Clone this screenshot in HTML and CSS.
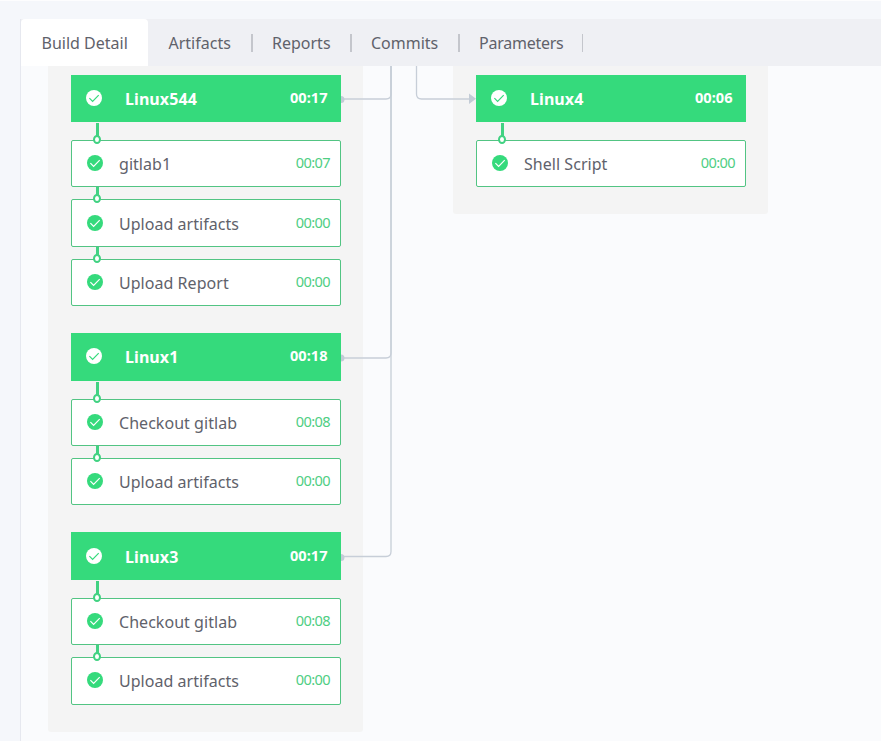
FILE: index.html
```
<!DOCTYPE html>
<html lang="en">
<head>
<meta charset="utf-8">
<title>Build Detail</title>
<link rel="stylesheet" href="styles.css">
</head>
<body>
<svg width="0" height="0" class="defs">
  <symbol id="check" viewBox="0 0 16 16"><circle cx="8" cy="8" r="8" fill="currentColor"/><path d="M3.4 8.2 6.6 11.4 12.7 5.2" fill="none" stroke="var(--tick)" stroke-width="1.2"/></symbol>
</svg>
<main class="page">
  <nav class="tabs">
    <a class="tab active"><span>Build Detail</span></a>
    <a class="tab sep"><span>Artifacts</span></a>
    <a class="tab sep"><span>Reports</span></a>
    <a class="tab sep"><span>Commits</span></a>
    <a class="tab sep last"><span>Parameters</span></a>
  </nav>
  <section class="canvas">
    <div class="stage">
      <div class="job">
        <header class="head"><svg class="icon"><use href="#check"/></svg><h2>Linux544</h2><time>00:17</time></header>
        <div class="step"><svg class="icon"><use href="#check"/></svg><span>gitlab1</span><time>00:07</time></div>
        <div class="step"><svg class="icon"><use href="#check"/></svg><span>Upload artifacts</span><time>00:00</time></div>
        <div class="step"><svg class="icon"><use href="#check"/></svg><span>Upload Report</span><time>00:00</time></div>
      </div>
      <div class="job">
        <header class="head"><svg class="icon"><use href="#check"/></svg><h2>Linux1</h2><time>00:18</time></header>
        <div class="step"><svg class="icon"><use href="#check"/></svg><span>Checkout gitlab</span><time>00:08</time></div>
        <div class="step"><svg class="icon"><use href="#check"/></svg><span>Upload artifacts</span><time>00:00</time></div>
      </div>
      <div class="job">
        <header class="head"><svg class="icon"><use href="#check"/></svg><h2>Linux3</h2><time>00:17</time></header>
        <div class="step"><svg class="icon"><use href="#check"/></svg><span>Checkout gitlab</span><time>00:08</time></div>
        <div class="step"><svg class="icon"><use href="#check"/></svg><span>Upload artifacts</span><time>00:00</time></div>
      </div>
    </div>
    <div class="stage short">
      <div class="job">
        <header class="head"><svg class="icon"><use href="#check"/></svg><h2>Linux4</h2><time>00:06</time></header>
        <div class="step"><svg class="icon"><use href="#check"/></svg><span>Shell Script</span><time>00:00</time></div>
      </div>
    </div>
    <svg class="links" width="140" height="520" viewBox="340 66 140 520">
      <g fill="none" stroke="#c7ced8" stroke-width="1.3">
        <path d="M341 99H386Q391 99 391 94V66"/>
        <path d="M341 358H386Q391 358 391 353V66"/>
        <path d="M341 556.5H386Q391 556.5 391 551.5V66"/>
        <path d="M416.5 66V94Q416.5 99 421.5 99H470"/>
      </g>
      <g fill="#c3ccd6">
        <path d="M341 96a3.2 3.2 0 0 1 0 7zM341 354.5a3.2 3.2 0 0 1 0 7zM341 554a3.2 3.2 0 0 1 0 7z"/>
        <path d="M469 93.5 476 98.8 469 104z"/>
      </g>
    </svg>
  </section>
</main>
</body>
</html>
```
FILE: styles.css
```
*, *::before, *::after { box-sizing: border-box; }
body {
  margin: 0;
  height: 741px;
  overflow: hidden;
  background: #f5f7fb;
  border-top: 1px solid #fdfdfe;
  font-family: "Noto Sans", sans-serif;
  color: #5f626b;
}
.defs { display: block; position: absolute; }
.page {
  margin: 18px 0 0 20px;
  height: 722px;
  border-left: 1px solid #e6e8ef;
  background: #fafbfd;
}
.tabs { display: flex; height: 47px; background: #eff0f4; }
.tab {
  position: relative;
  display: flex;
  align-items: center;
  padding: 0 0 0 20.5px;
  font-size: 16px;
  white-space: nowrap;
}
.tab span { display: block; line-height: 24px; padding-top: 1px; }
.active { width: 127px; background: #fff; border-radius: 4px 4px 0 0; }
.sep { justify-content: space-between; }
.sep::after { content: ""; width: 2px; height: 18px; background: #c4c6cc; }
.sep:nth-child(2) { width: 105px; }
.sep:nth-child(3) { width: 99px; padding-left: 19px; }
.sep:nth-child(4) { width: 108px; padding-left: 19px; }
.sep:nth-child(5) { width: 123px; padding-left: 19px; letter-spacing: -0.25px; }
.last::after { width: 1px; }
.canvas {
  position: relative;
  display: flex;
  align-items: flex-start;
  gap: 90px;
  height: 675px;
  padding-left: 27px;
}
.stage {
  width: 315px;
  padding: 8.6px 22px 27.2px 23px;
  background: #f4f4f4;
  border-radius: 0 0 3px 3px;
}
.short { padding-bottom: 26.6px; }
.job + .job { margin-top: 27px; }
.head, .step { display: flex; align-items: center; position: relative; }
.head {
  --tick: #35da7c;
  height: 47.6px;
  margin-bottom: 17.9px;
  padding: 0 13px 0 15px;
  background: #35da7c;
  color: #fff;
}
.step {
  --tick: #fff;
  height: 47.3px;
  padding: 0 10px 0 15px;
  border: 1px solid #52c483;
  border-radius: 2px;
  background: #fff;
}
.step + .step { margin-top: 12.1px; }
.icon { width: 16px; height: 16px; flex: none; margin-top: -1px; }
.step .icon { color: #35da7c; }
h2 { margin: 0 0 0 23px; padding-top: 1px; font-size: 16px; font-weight: 700; line-height: 24px; letter-spacing: 0.08px; }
.step span { margin-left: 16px; padding-top: 1px; font-size: 16px; line-height: 24px; letter-spacing: 0.04px; }
time { margin-left: auto; font-size: 14.6px; line-height: 20px; margin-top: -3px; }
.head time { font-weight: 700; margin-right: 0.5px; }
.step time { color: #4fce83; letter-spacing: -0.6px; }
.step::before {
  content: "";
  position: absolute;
  left: 24px;
  top: -13px;
  width: 3px;
  height: 9px;
  background: #41d282;
}
.head + .step::before { top: -18px; height: 14px; }
.step::after {
  content: "";
  position: absolute;
  left: 21px;
  top: -6px;
  width: 8px;
  height: 9px;
  border: 2px solid #41d282;
  border-radius: 50%;
  background: #fff;
}
.links { position: absolute; left: 319px; top: 0; }
```
